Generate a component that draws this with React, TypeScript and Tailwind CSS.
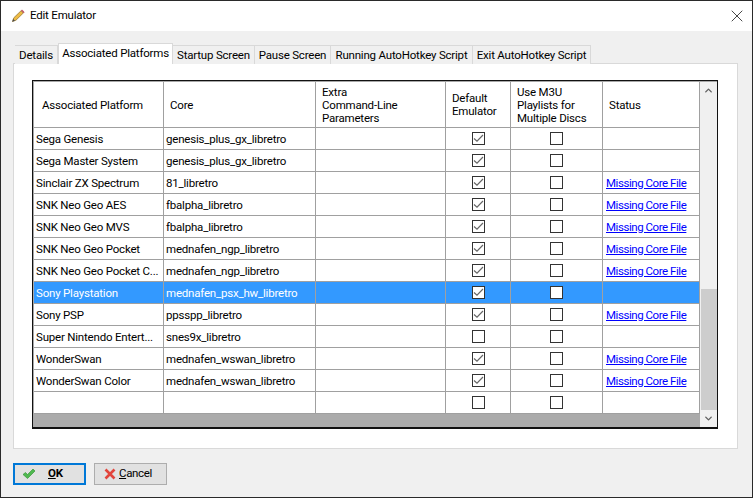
import { ChevronDown, ChevronUp, X } from 'lucide-react';

const ROWS = [
  { platform: 'Sega Genesis', core: 'genesis_plus_gx_libretro', def: true, missing: false },
  { platform: 'Sega Master System', core: 'genesis_plus_gx_libretro', def: true, missing: false },
  { platform: 'Sinclair ZX Spectrum', core: '81_libretro', def: true, missing: true },
  { platform: 'SNK Neo Geo AES', core: 'fbalpha_libretro', def: true, missing: true },
  { platform: 'SNK Neo Geo MVS', core: 'fbalpha_libretro', def: true, missing: true },
  { platform: 'SNK Neo Geo Pocket', core: 'mednafen_ngp_libretro', def: true, missing: true },
  { platform: 'SNK Neo Geo Pocket C...', core: 'mednafen_ngp_libretro', def: true, missing: true },
  { platform: 'Sony Playstation', core: 'mednafen_psx_hw_libretro', def: true, missing: false, selected: true },
  { platform: 'Sony PSP', core: 'ppsspp_libretro', def: true, missing: true },
  { platform: 'Super Nintendo Entert...', core: 'snes9x_libretro', def: false, missing: false },
  { platform: 'WonderSwan', core: 'mednafen_wswan_libretro', def: true, missing: true },
  { platform: 'WonderSwan Color', core: 'mednafen_wswan_libretro', def: true, missing: true },
  { platform: '', core: '', def: false, missing: false },
];

const COLS = 'grid grid-cols-[130px_152px_130px_65px_92px_97px]';
const CELL = 'flex items-center whitespace-nowrap border-b border-r border-[#a0a0a0]';
const TAB = 'flex h-[19px] items-center justify-center whitespace-nowrap border border-b-0 border-l-0 border-[#d9d9d9] bg-[#f0f0f0] pt-[2px]';

function Box({ checked, white }: { checked: boolean; white?: boolean }) {
  return (
    <span className={`flex h-[13px] w-[13px] items-center justify-center border border-[#333333] ${white ? 'bg-white' : ''}`}>
      {checked && (
        <svg width="11" height="11" viewBox="0 0 11 11" fill="none">
          <path d="M1 5.5 L4 8.2 L10 2" stroke="#666666" strokeWidth="1.2" />
        </svg>
      )}
    </span>
  );
}

export default function App() {
  return (
    <div className="flex h-[498px] w-[753px] flex-col overflow-hidden border border-[#2a2a2a] bg-[#f0f0f0] [font-family:Roboto,sans-serif] text-[11.5px] leading-none tracking-[-0.2px] text-black">
      {/* barre de titre */}
      <div className="flex h-[30px] shrink-0 items-center bg-white pl-[10px] pr-[5px]">
        <svg width="14" height="14" viewBox="0 0 14 14" fill="none">
          <path d="M1.5 12.5 L2.8 8.8 L10 1.8 L12.3 4 L5 11.2 Z" fill="#eebb44" stroke="#8a6d2f" strokeWidth="0.7" />
          <path d="M10.4 1.4 L11 0.9 L13.2 3 L12.6 3.8 Z" fill="#e0707a" stroke="#b04050" strokeWidth="0.7" />
          <path d="M1.2 12.8 L2.2 10 L4 11.7 Z" fill="#4a4a4a" />
        </svg>
        <span className="ml-[5px]">Edit Emulator</span>
        <X className="ml-auto h-[20px] w-[20px] text-[#222222]" strokeWidth={1} absoluteStrokeWidth />
      </div>

      {/* onglets */}
      <div className="relative z-10 -mb-px flex h-[33px] shrink-0 items-end pl-[14px]">
        <div className={`${TAB} w-[43px] border-l`}>Details</div>
        <div className="flex h-[21px] w-[115px] items-start justify-center whitespace-nowrap border border-b-0 border-[#d9d9d9] bg-white pt-[4px]">Associated Platforms</div>
        <div className={`${TAB} w-[82px]`}>Startup Screen</div>
        <div className={`${TAB} w-[76px]`}>Pause Screen</div>
        <div className={`${TAB} w-[142px]`}>Running AutoHotkey Script</div>
        <div className={`${TAB} w-[118px]`}>Exit AutoHotkey Script</div>
      </div>

      {/* panneau */}
      <div className="ml-[12px] h-[386px] w-[725px] shrink-0 border border-[#d9d9d9] bg-white pl-[18px] pt-[16px]">
        <div className="h-[349px] w-[686px] border border-b-2 border-[#111111]">
          <div className="flex h-full border-l border-t border-[#a8a8a8]">
            <div className="flex w-[667px] flex-col bg-[#ababab]">
              {/* en-tête */}
              <div className={`${COLS} h-[46px] shrink-0 bg-white`}>
                <div className={`${CELL} pl-[8px] pt-[2px]`}>Associated Platform</div>
                <div className={`${CELL} pl-[6px] pt-[2px]`}>Core</div>
                <div className={`${CELL} pl-[6px] pt-[1px] leading-[13px]`}>
                  <span>Extra<br />Command-Line<br />Parameters</span>
                </div>
                <div className={`${CELL} pl-[6px] pt-[1px] leading-[13px]`}>
                  <span>Default<br />Emulator</span>
                </div>
                <div className={`${CELL} pl-[6px] pt-[1px] leading-[13px]`}>
                  <span>Use M3U<br />Playlists for<br />Multiple Discs</span>
                </div>
                <div className={`${CELL} pl-[6px] pt-[2px]`}>Status</div>
              </div>
              {/* lignes */}
              {ROWS.map((row, i) => (
                <div key={i} className={`${COLS} h-[22px] shrink-0 ${row.selected ? 'bg-[#3399ff] text-white' : 'bg-white'}`}>
                  <div className={`${CELL} overflow-hidden pl-[2px] pt-[2px]`}>{row.platform}</div>
                  <div className={`${CELL} overflow-hidden pl-[2px] pt-[2px]`}>{row.core}</div>
                  <div className={CELL} />
                  <div className={`${CELL} justify-center`}>
                    <Box checked={row.def} white={row.selected} />
                  </div>
                  <div className={`${CELL} justify-center`}>
                    <Box checked={false} white={row.selected} />
                  </div>
                  <div className={`${CELL} pl-[3px] pt-[2px]`}>
                    {row.missing && <a className="tracking-[-0.45px] text-[#0000ff] underline">Missing Core File</a>}
                  </div>
                </div>
              ))}
            </div>
            {/* barre de défilement */}
            <div className="flex w-[17px] flex-col bg-[#f0f0f0]">
              <div className="flex h-[17px] items-center justify-center">
                <ChevronUp className="h-[11px] w-[11px] text-[#606060]" strokeWidth={3} />
              </div>
              <div className="flex-1 pl-px pt-[190px]">
                <div className="h-full bg-[#cdcdcd]" />
              </div>
              <div className="flex h-[17px] items-center justify-center">
                <ChevronDown className="h-[11px] w-[11px] text-[#606060]" strokeWidth={3} />
              </div>
            </div>
          </div>
        </div>
      </div>

      {/* boutons */}
      <div className="flex gap-[8px] pl-[12px] pt-[14px]">
        <button className="flex h-[22px] w-[73px] items-center border-2 border-[#0078d7] bg-[#e1e1e1] pl-[7px] font-bold">
          <svg width="14" height="12" viewBox="0 0 14 12">
            <path d="M1 6.5 L3.5 4.5 L5.5 6.5 L11 1 L13 3 L5.5 10.5 Z" fill="#4fb84f" stroke="#2e8f2e" strokeWidth="0.6" />
          </svg>
          <span className="ml-[12px]"><span className="underline">O</span>K</span>
        </button>
        <button className="flex h-[22px] w-[73px] items-center border border-[#adadad] bg-[#e1e1e1] pl-[9px] tracking-[-0.35px]">
          <svg width="12" height="12" viewBox="0 0 12 12">
            <path d="M1.5 1.5 L10.5 10.5 M10.5 1.5 L1.5 10.5" stroke="#e2453c" strokeWidth="2.6" />
          </svg>
          <span className="ml-[3px]"><span className="underline">C</span>ancel</span>
        </button>
      </div>
    </div>
  );
}
